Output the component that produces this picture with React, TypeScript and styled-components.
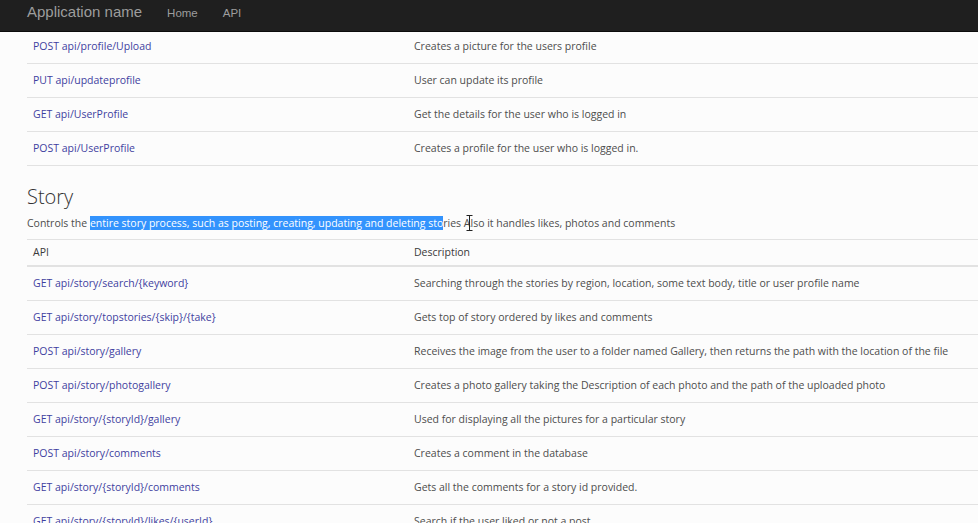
import React from 'react';
import styled, { createGlobalStyle } from 'styled-components';

const Global = createGlobalStyle`
  html, body {
    margin: 0;
    padding: 0;
    background: #fcfcfc;
    overflow: hidden;
  }
  body {
    font-family: "Open Sans", "Noto Sans", sans-serif;
    font-size: 10.5px;
    color: #4d4d4d;
  }
`;

const Navbar = styled.nav`
  position: fixed;
  top: 0;
  left: 0;
  right: 0;
  height: 32px;
  box-sizing: border-box;
  background: #1f1f1f;
  border-bottom: 1px solid #0c0c0c;
  display: flex;
  align-items: baseline;
  padding: 3px 0 0 27px;
  gap: 25px;
  font-family: "Liberation Sans", Arial, sans-serif;
  z-index: 10;
`;

const Brand = styled.a`
  color: #9d9d9d;
  font-size: 15px;
  text-decoration: none;
`;

const NavLink = styled.a`
  color: #9d9d9d;
  font-size: 11.5px;
  text-decoration: none;
`;

const Page = styled.main`
  padding: 30px 0 0 27px;
`;

const Table = styled.table`
  width: calc(100% + 20px);
  border-collapse: collapse;
  table-layout: fixed;
`;

const Row = styled.tr`
  border-bottom: 1px solid #e2e2e2;
`;

const HeadRow = styled.tr`
  border-top: 1px solid #e2e2e2;
  border-bottom: 2px solid #e2e2e2;
`;

const Th = styled.th<{ $w?: number }>`
  width: ${(p) => (p.$w ? `${p.$w}px` : 'auto')};
  text-align: left;
  font-weight: 400;
  color: #3a3a3a;
  padding: 4px 6px;
  height: 17px;
  line-height: 17px;
`;

const Td = styled.td<{ $w?: number }>`
  width: ${(p) => (p.$w ? `${p.$w}px` : 'auto')};
  padding: 0 6px;
  height: 33px;
  line-height: 17px;
  vertical-align: middle;
  white-space: nowrap;
`;

const ApiLink = styled.a`
  color: #3f3fa0;
  text-decoration: none;
`;

const Heading = styled.h2`
  font-weight: 300;
  font-size: 20px;
  line-height: 23px;
  margin: 19px 0 6px;
  color: #333;
`;

const Intro = styled.p`
  position: relative;
  margin: 0 0 7px;
  line-height: 18px;
`;

const Selected = styled.span`
  background: #3393fd;
  color: #fff;
`;

const Caret = styled.svg`
  position: absolute;
  left: 439px;
  top: 1px;
`;

type Endpoint = { api: string; desc: string };

const profileRows: Endpoint[] = [
  { api: 'POST api/profile/Upload', desc: 'Creates a picture for the users profile' },
  { api: 'PUT api/updateprofile', desc: 'User can update its profile' },
  { api: 'GET api/UserProfile', desc: 'Get the details for the user who is logged in' },
  { api: 'POST api/UserProfile', desc: 'Creates a profile for the user who is logged in.' },
];

const storyRows: Endpoint[] = [
  { api: 'GET api/story/search/{keyword}', desc: 'Searching through the stories by region, location, some text body, title or user profile name' },
  { api: 'GET api/story/topstories/{skip}/{take}', desc: 'Gets top of story ordered by likes and comments' },
  { api: 'POST api/story/gallery', desc: 'Receives the image from the user to a folder named Gallery, then returns the path with the location of the file' },
  { api: 'POST api/story/photogallery', desc: 'Creates a photo gallery taking the Description of each photo and the path of the uploaded photo' },
  { api: 'GET api/story/{storyId}/gallery', desc: 'Used for displaying all the pictures for a particular story' },
  { api: 'POST api/story/comments', desc: 'Creates a comment in the database' },
  { api: 'GET api/story/{storyId}/comments', desc: 'Gets all the comments for a story id provided.' },
  { api: 'GET api/story/{storyId}/likes/{userId}', desc: 'Search if the user liked or not a post' },
];

const ApiRows = ({ rows }: { rows: Endpoint[] }) => (
  <tbody>
    {rows.map((r) => (
      <Row key={r.api}>
        <Td $w={369}>
          <ApiLink href="#">{r.api}</ApiLink>
        </Td>
        <Td>{r.desc}</Td>
      </Row>
    ))}
  </tbody>
);

const App = () => (
  <>
    <Global />
    <Navbar>
      <Brand href="#">Application name</Brand>
      <NavLink href="#">Home</NavLink>
      <NavLink href="#">API</NavLink>
    </Navbar>
    <Page>
      <Table>
        <ApiRows rows={profileRows} />
      </Table>

      <Heading>Story</Heading>
      <Intro>
        Controls the <Selected>entire story process, such as posting, creating, updating and deleting sto</Selected>ries Also it
        handles likes, photos and comments
        <Caret width="7" height="16" viewBox="0 0 7 16">
          <path d="M0.5 0.5h6M3.5 0.5v15M0.5 15.5h6" stroke="#222" strokeWidth="1" fill="none" />
        </Caret>
      </Intro>
      <Table>
        <thead>
          <HeadRow>
            <Th $w={369}>API</Th>
            <Th>Description</Th>
          </HeadRow>
        </thead>
        <ApiRows rows={storyRows} />
      </Table>
    </Page>
  </>
);

export default App;
